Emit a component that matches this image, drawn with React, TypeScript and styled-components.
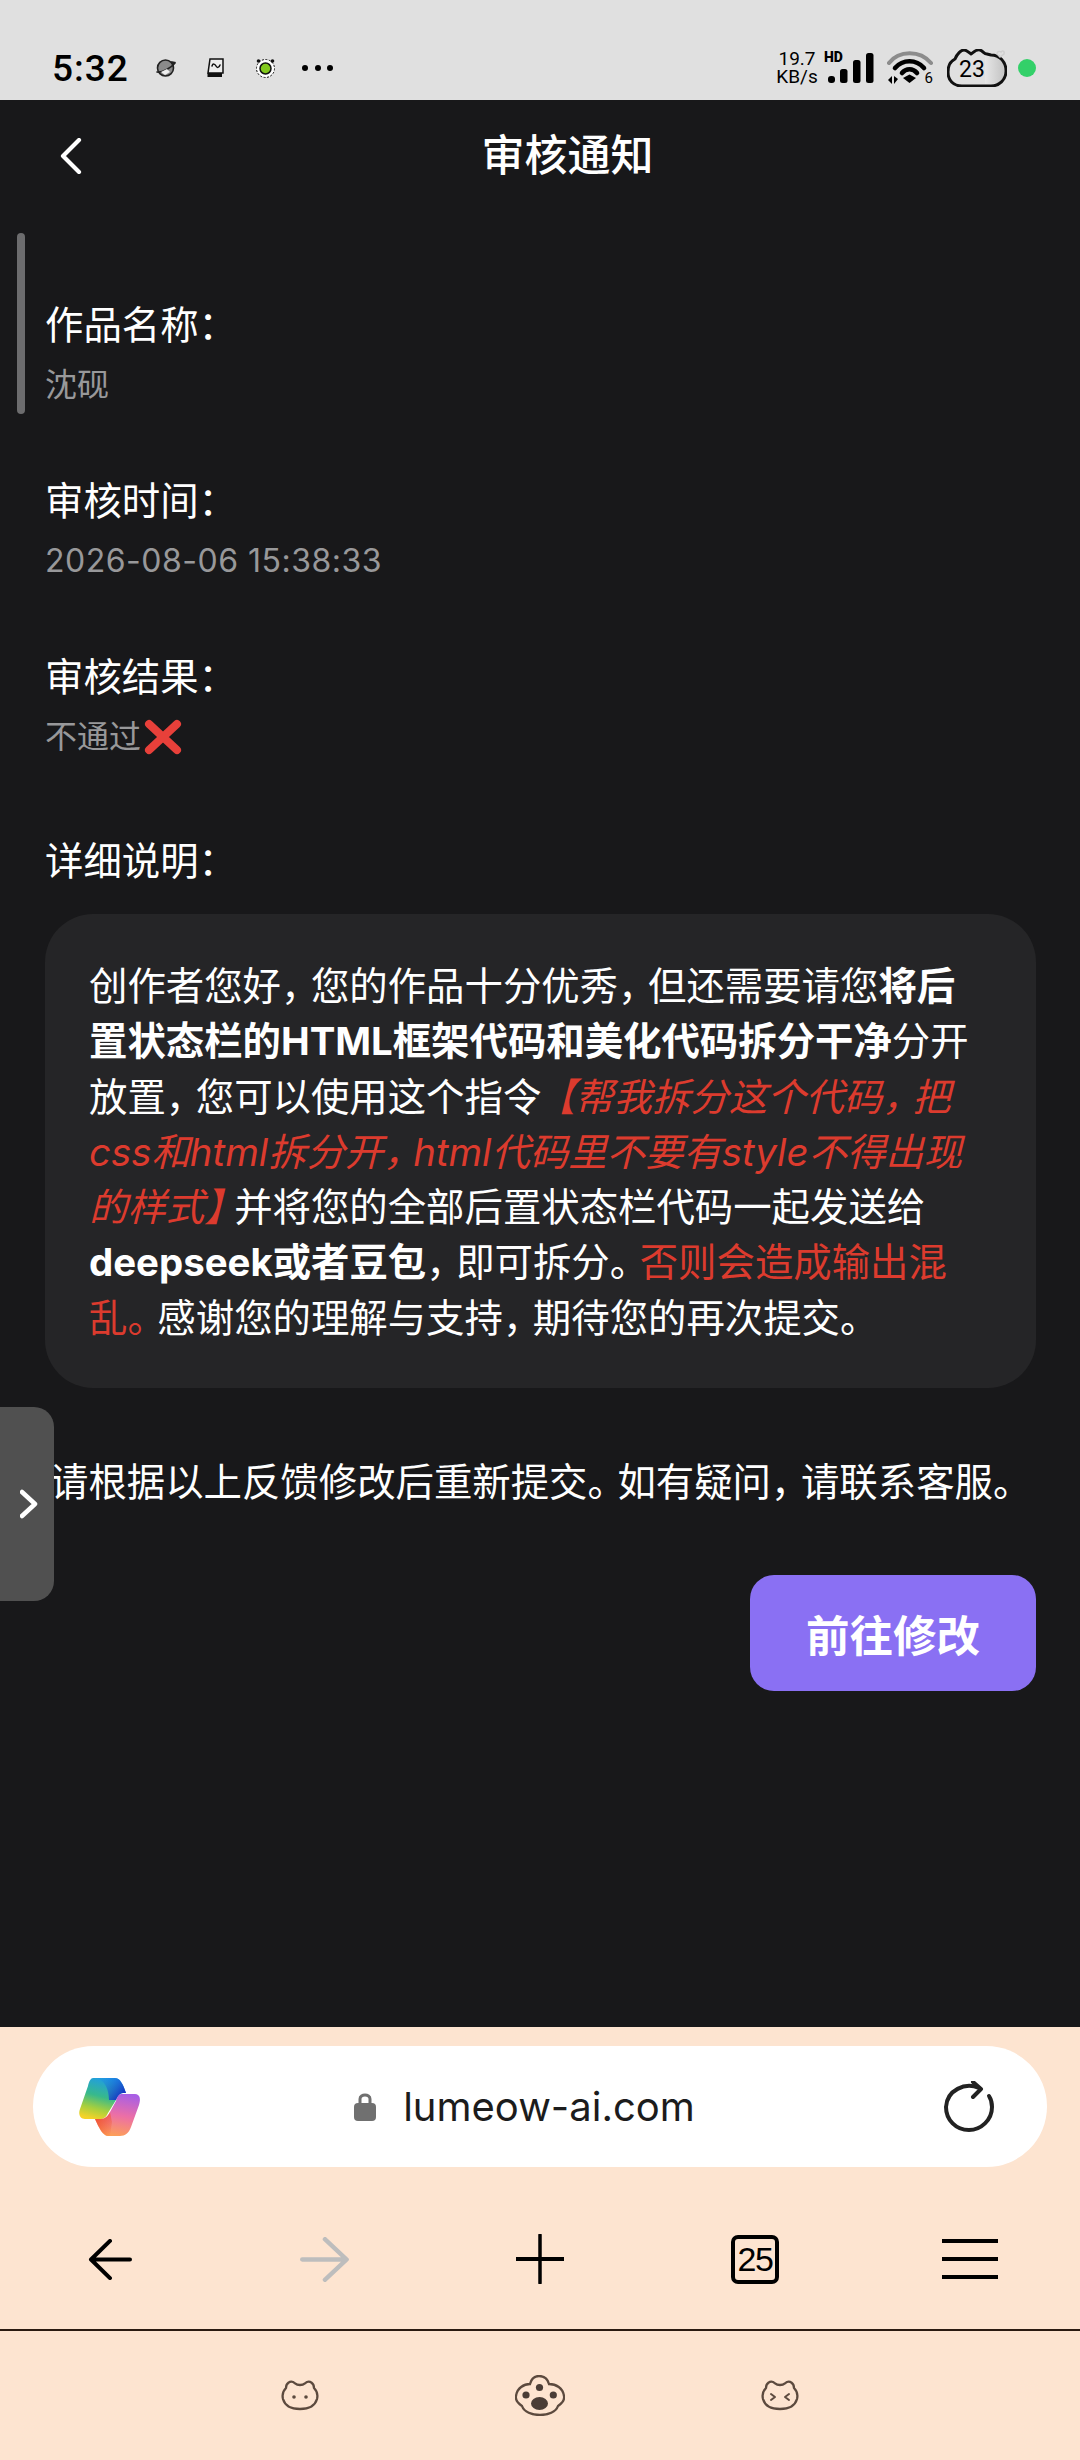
import React from "react"
import styled, { createGlobalStyle } from "styled-components"

const GlobalStyle = createGlobalStyle`
  html, body {
    margin: 0;
    padding: 0;
    background: #18181a;
  }
  * {
    box-sizing: border-box;
  }
`

const fontStack = `Inter, "Noto Sans CJK SC", sans-serif`

// full-width punctuation
const COMMA = "\uFF0C"
const COLON = "\uFF1A"

const Page = styled.div`
  width: 1080px;
  height: 2460px;
  position: relative;
  overflow: hidden;
  display: flex;
  flex-direction: column;
  font-family: ${fontStack};
  color: #fff;
  background: #18181a;
`

const StatusBar = styled.div`
  height: 100px;
  flex: none;
  background: #e0e0e0;
  color: #000;
  display: flex;
  align-items: flex-end;
  justify-content: space-between;
  padding: 0 44px 11px 52px;
`

const StatusLeft = styled.div`
  display: flex;
  align-items: center;
  height: 42px;
`

const Clock = styled.span`
  font-family: Roboto, sans-serif;
  font-size: 37px;
  font-weight: 500;
  letter-spacing: 1px;
  width: 104px;
`

const NotifIcons = styled.div`
  display: flex;
  align-items: center;
  gap: 31px;
`

const Dots = styled.div`
  display: flex;
  gap: 6.5px;
  margin-left: -5px;
`

const Dot = styled.i`
  display: block;
  width: 6px;
  height: 6px;
  border-radius: 50%;
  background: #000;
`

const StatusRight = styled.div`
  display: flex;
  align-items: center;
  height: 42px;
`

const Speed = styled.div`
  font-family: Roboto, sans-serif;
  font-size: 19px;
  line-height: 18px;
  text-align: center;
  width: 42px;
  white-space: nowrap;
  color: #000;
`

const SignalWrap = styled.div`
  position: relative;
  width: 48px;
  height: 34px;
  margin-left: 9px;
`

const HdLabel = styled.span`
  position: absolute;
  left: -3px;
  top: -1px;
  font-family: Roboto, sans-serif;
  font-size: 14px;
  line-height: 14px;
  font-weight: 900;
`

const WifiWrap = styled.div`
  position: relative;
  width: 46px;
  height: 34px;
  margin-left: 12px;
`

const WifiBadge = styled.span`
  position: absolute;
  right: 0;
  bottom: -1px;
  font-family: Roboto, sans-serif;
  font-size: 15px;
  line-height: 15px;
`

const BatteryWrap = styled.div`
  position: relative;
  width: 60px;
  height: 38px;
  margin-left: 14px;
`

const BatteryText = styled.span`
  position: absolute;
  left: 11px;
  top: 9px;
  width: 28px;
  text-align: center;
  font-family: Roboto, sans-serif;
  font-size: 23px;
  line-height: 24px;
`

const LiveDot = styled.i`
  display: block;
  width: 18px;
  height: 18px;
  border-radius: 50%;
  background: #33d069;
  margin-left: 11px;
`

const Header = styled.div`
  height: 104px;
  flex: none;
  position: relative;
  display: flex;
  align-items: center;
  justify-content: center;
`

const BackButton = styled.div`
  position: absolute;
  left: 59px;
  top: 38px;
  display: flex;
`

const Title = styled.h1`
  margin: 0 0 0 55px;
  font-size: 43px;
  font-weight: 500;
`

const Content = styled.div`
  flex: 1;
  position: relative;
  padding: 93px 44px 0 45px;
`

const ScrollThumb = styled.div`
  position: absolute;
  left: 17px;
  top: 29px;
  width: 8px;
  height: 181px;
  border-radius: 4px;
  background: #6c6c6e;
`

const Field = styled.div<{ $gap?: number }>`
  margin-bottom: ${(p) => p.$gap ?? 60}px;
`

const Label = styled.div`
  font-size: 38.4px;
  line-height: 56px;
  height: 56px;
`

const Value = styled.div`
  margin-top: 4px;
  font-size: 32px;
  line-height: 56px;
  height: 56px;
  color: #98989a;
  display: flex;
  align-items: center;
`

const DateValue = styled(Value)`
  letter-spacing: 0.5px;
`

const Card = styled.div`
  margin-top: 25px;
  width: 991px;
  height: 474px;
  border-radius: 48px;
  background: #252527;
  padding: 45px 44px;
  font-size: 38.4px;
  line-height: 55.3px;
  white-space: nowrap;
`

const Strong = styled.b`
  font-weight: 700;
`

const Red = styled.span`
  color: #dc3b2e;
`

const RedItalic = styled.em`
  color: #dc3b2e;
  font-style: italic;
`

// the reference sets CJK punctuation a little narrower than a full em
const Tight = styled.span<{ $em?: number }>`
  letter-spacing: ${(p) => p.$em ?? -0.22}em;
`

const Comma = () => <Tight>{COMMA}</Tight>

const Note = styled.p`
  margin: 66px 0 0 5px;
  font-size: 38.4px;
  line-height: 56px;
  white-space: nowrap;
`

const Actions = styled.div`
  display: flex;
  justify-content: flex-end;
  margin-top: 65px;
`

const EditButton = styled.button`
  width: 286px;
  height: 116px;
  border: none;
  border-radius: 24px;
  background: #8a70f3;
  color: #fff;
  font-family: ${fontStack};
  font-size: 43.5px;
  font-weight: 700;
`

const SideTab = styled.div`
  position: absolute;
  left: 0;
  top: 1407px;
  width: 54px;
  height: 194px;
  border-radius: 0 20px 20px 0;
  background: #505050;
  display: flex;
  align-items: center;
  padding-left: 20px;
`

const BrowserChrome = styled.div`
  height: 433px;
  flex: none;
  background: #fde4d0;
  color: #000;
  display: flex;
  flex-direction: column;
`

const AddressArea = styled.div`
  height: 304px;
  padding-top: 19px;
  border-bottom: 2px solid #2a1a10;
  display: flex;
  flex-direction: column;
`

const AddressBar = styled.div`
  margin: 0 33px;
  height: 121px;
  flex: none;
  border-radius: 61px;
  background: #fff;
  display: flex;
  align-items: center;
  justify-content: space-between;
  padding: 0 52px 0 46px;
`

const Domain = styled.div`
  display: flex;
  align-items: center;
  gap: 27px;
  margin-right: 35px;
  font-size: 40px;
  color: #1c1c1c;
`

const ToolRow = styled.div`
  flex: 1;
  display: grid;
  grid-template-columns: repeat(5, 215px);
  justify-content: center;
  justify-items: center;
  align-items: center;
  padding-top: 22px;
`

const TabCount = styled.div`
  width: 48px;
  height: 49px;
  border: 4px solid #000;
  border-radius: 7px;
  display: flex;
  align-items: center;
  justify-content: center;
  font-family: "Liberation Sans", sans-serif;
  font-size: 34px;
  letter-spacing: -1.5px;
`

const CatRow = styled.div`
  flex: 1;
  display: grid;
  grid-template-columns: repeat(3, 240px);
  justify-content: center;
  justify-items: center;
  align-items: center;
`

const Line = styled.path.attrs({ fill: "none", strokeLinecap: "round", strokeLinejoin: "round" })``

const CrossSvg = styled.svg`
  margin-left: 3px;
`

// small notification glyphs next to the clock
const PlanetIcon = () => (
  <svg width="20" height="20" viewBox="0 0 20 20">
    <circle cx="9.5" cy="10" r="8" fill="#8a8a8a" stroke="#222" strokeWidth="1.6" />
    <Line d="M1 14 C6 15 15 10 19 5" stroke="#222" strokeWidth="1.6" />
    <path d="M5 14 L11 11 L14 14 L9 17 Z" fill="#eee" />
    <path d="M15 3 L20 4 L17 8 Z" fill="#222" />
  </svg>
)

const BookIcon = () => (
  <svg width="17" height="20" viewBox="0 0 17 20">
    <path d="M3 1 H16 V15 H1 Z" fill="#eee" stroke="#111" strokeWidth="1.5" />
    <path d="M0.5 15 H15 V19 H0.5 Z" fill="#111" />
    <Line d="M5 8 C6 5 8 6 9 8 C10 10 12 10 13 7" stroke="#111" strokeWidth="1.5" />
  </svg>
)

const FrogIcon = () => (
  <svg width="21" height="20" viewBox="0 0 21 20">
    <circle cx="10.5" cy="10.5" r="9" fill="#fff" stroke="#111" strokeWidth="1" strokeDasharray="2 1.5" />
    <circle cx="10.5" cy="10.5" r="5.5" fill="#82c91e" stroke="#111" strokeWidth="1.5" />
    <circle cx="3.5" cy="3" r="1.8" fill="#111" />
    <circle cx="17.5" cy="3" r="1.8" fill="#111" />
  </svg>
)

const SignalIcon = () => (
  <svg width="48" height="34" viewBox="0 0 48 34">
    <rect x="1" y="25" width="7" height="7" rx="3" fill="#000" />
    <rect x="13" y="18" width="7.5" height="14" rx="2.5" fill="#000" />
    <rect x="26" y="9" width="7.5" height="23" rx="2.5" fill="#000" />
    <rect x="39" y="2" width="7.5" height="30" rx="2.5" fill="#000" />
  </svg>
)

const WifiIcon = () => (
  <svg width="46" height="34" viewBox="0 0 46 34">
    <Line d="M2 12 C12 -1 33 -1 44 12" stroke="#8c8c8c" strokeWidth="4" />
    <Line d="M8 17 C16 8 29 8 37 17" stroke="#000" strokeWidth="4.6" />
    <Line d="M15 22 C19 17 26 17 30 22" stroke="#000" strokeWidth="4.6" />
    <path d="M16 27 L22.5 23.5 L29 27 L22.5 32 Z" fill="#000" />
    <path d="M1 29 L5 25 L5 33 Z M7 25 L7 33 L11 28 Z" fill="#000" />
  </svg>
)

const BatteryIcon = () => (
  <svg width="60" height="38" viewBox="0 0 60 38" style={{ position: "absolute", left: 0, top: 0 }}>
    <defs>
      <linearGradient id="battFill" x1="0" y1="0" x2="1" y2="0">
        <stop offset="0" stopColor="#e6e6e6" />
        <stop offset="1" stopColor="#c4c4c4" />
      </linearGradient>
    </defs>
    <path d="M38 7 H45 C52 7 57 13 57 22 C57 30 52 35 44 35 H38 Z" fill="url(#battFill)" />
    <path
      d="M8 10 C10 5 14 1 17 1 C20 1 22 4 24 5 C26 4 29 0 33 1 C36 2 37 5 40 5 L44 6 C52 6 59 12 59 22 C59 31 52 37 44 37 L15 37 C6 37 1 31 1 23 C1 17 4 12 8 10 Z"
      fill="none"
      stroke="#111"
      strokeWidth="3"
    />
    <path d="M50 5 C50 2 53 2 54 3 C55 1 58 2 57 5 L53 8 Z" fill="none" stroke="#cfcfcf" strokeWidth="1.4" />
  </svg>
)

const BackIcon = () => (
  <svg width="24" height="36" viewBox="0 0 24 36">
    <Line d="M20 2 L4 18 L20 34" stroke="#fff" strokeWidth="4.2" />
  </svg>
)

const SideChevron = () => (
  <svg width="18" height="30" viewBox="0 0 18 30">
    <Line d="M2 3 L15 15 L2 27" stroke="#fff" strokeWidth="4.5" />
  </svg>
)

const CopilotIcon = () => (
  <svg width="62" height="58" viewBox="0 0 62 58">
    <defs>
      <linearGradient id="cpLeft" x1="0.6" y1="0" x2="0.3" y2="1">
        <stop offset="0" stopColor="#1f9be8" />
        <stop offset="0.45" stopColor="#37b98c" />
        <stop offset="0.75" stopColor="#a6cf3e" />
        <stop offset="1" stopColor="#f5d327" />
      </linearGradient>
      <linearGradient id="cpBlue" x1="0" y1="0" x2="1" y2="0.6">
        <stop offset="0" stopColor="#1f9be8" stopOpacity="0" />
        <stop offset="1" stopColor="#1432c4" />
      </linearGradient>
      <linearGradient id="cpRight" x1="0.6" y1="0" x2="0.4" y2="1">
        <stop offset="0" stopColor="#a95fe4" />
        <stop offset="0.5" stopColor="#ec6fa6" />
        <stop offset="1" stopColor="#fda057" />
      </linearGradient>
      <linearGradient id="cpTail" x1="0" y1="0" x2="1" y2="1">
        <stop offset="0" stopColor="#f04c22" />
        <stop offset="1" stopColor="#f04c22" stopOpacity="0" />
      </linearGradient>
    </defs>
    <path
      d="M14 0 H36 C41 0 44 6 47 15 H44 C41 15 39 18 37 22 L29 35 C27 39 25 41 21 41 H6 C1 41 -1 36 1 31 L9 8 C10 3 12 0 14 0 Z"
      fill="url(#cpLeft)"
    />
    <path
      d="M14 0 H36 C41 0 44 6 47 15 H44 C41 15 39 18 37 22 L30 22 C30 12 26 0 14 0 Z"
      fill="url(#cpBlue)"
    />
    <path
      d="M42 16 H56 C61 16 62 21 60 27 L52 49 C50 55 46 58 41 58 H29 C24 58 20 50 16 41 H22 C26 41 29 38 31 34 L37 23 C38 19 40 16 42 16 Z"
      fill="url(#cpRight)"
    />
    <path
      d="M16 41 H22 C26 41 29 38 31 34 L33 44 L31 58 H29 C24 58 20 50 16 41 Z"
      fill="url(#cpTail)"
    />
  </svg>
)

const LockIcon = () => (
  <svg width="22" height="29" viewBox="0 0 22 29">
    <path d="M6 13 V7 C6 1.5 16 1.5 16 7 V13" fill="none" stroke="#707070" strokeWidth="3" />
    <rect x="0" y="11" width="22" height="18" rx="4" fill="#707070" />
  </svg>
)

const ReloadIcon = () => (
  <svg width="52" height="52" viewBox="0 0 52 52">
    <Line d="M36 7 C22 1 4 9 3 26 C3 39 13 49 26 49 C38 49 49 39 49 26 C49 22 48 18 46 15" stroke="#222" strokeWidth="4" />
    <Line d="M30 1 L38 8 L30 16" stroke="#222" strokeWidth="4" />
  </svg>
)

const ArrowIcon = ({ flip, color, width, height }: { flip?: boolean; color: string; width: number; height: number }) => (
  <svg
    width={width}
    height={height}
    viewBox="0 0 44 42"
    preserveAspectRatio="none"
    style={flip ? { transform: "scaleX(-1)" } : undefined}
  >
    <Line d="M42 21 H4 M22 2 L3 21 L22 40" stroke={color} strokeWidth="4" />
  </svg>
)

const PlusIcon = () => (
  <svg width="50" height="50" viewBox="0 0 50 50">
    <Line d="M25 1 V49" stroke="#000" strokeWidth="3.5" />
    <path d="M1 23 H49 V27 H1 Z" fill="#000" />
  </svg>
)

const MenuIcon = () => (
  <svg width="56" height="42" viewBox="0 0 56 42">
    <path d="M0 1 H56 V5 H0 Z M0 19 H56 V23 H0 Z M0 37 H56 V41 H0 Z" fill="#000" />
  </svg>
)

const CatFace = ({ face }: { face: "dots" | "squint" }) => (
  <svg width="38" height="31" viewBox="0 0 38 31">
    <path
      d="M5 8 C5 3 9 1 12 2 C14 3 15 5 19 5 C23 5 24 3 26 2 C29 1 33 3 33 8 C36 11 37 15 36 19 C34 26 27 29 19 29 C11 29 4 26 2 19 C1 15 2 11 5 8 Z"
      fill="none"
      stroke="#5c4a3e"
      strokeWidth="2.3"
      strokeLinejoin="round"
    />
    {face === "dots" ? (
      <>
        <circle cx="13" cy="17" r="1.8" fill="#5c4a3e" />
        <circle cx="25" cy="17" r="1.8" fill="#5c4a3e" />
      </>
    ) : (
      <>
        <Line d="M10 14 L14 17 L10 20" stroke="#5c4a3e" strokeWidth="2" />
        <Line d="M28 14 L24 17 L28 20" stroke="#5c4a3e" strokeWidth="2" />
      </>
    )}
  </svg>
)

const PawIcon = () => (
  <svg width="50" height="41" viewBox="0 0 50 41">
    <path
      d="M24 1 C30 1 33 5 34 9 C41 9 48 13 49 21 C50 26 46 29 43 31 C41 37 33 40 25 40 C17 40 9 37 7 31 C4 29 0 26 1 21 C2 13 9 9 15 9 C16 5 19 1 24 1 Z"
      fill="#fde4d0"
      stroke="#5c4a3e"
      strokeWidth="2.3"
    />
    <ellipse cx="24.5" cy="28.5" rx="8.5" ry="6.5" fill="#4a3d36" />
    <circle cx="24.5" cy="12.5" r="3.6" fill="#4a3d36" />
    <circle cx="11" cy="20" r="3.6" fill="#4a3d36" />
    <circle cx="38.3" cy="20" r="3.6" fill="#4a3d36" />
  </svg>
)

const CrossMark = () => (
  <CrossSvg width="38" height="36" viewBox="0 0 38 36">
    <Line d="M5 5 L33 31 M33 5 L5 31" stroke="#e8403a" strokeWidth="8" />
  </CrossSvg>
)

export default function App() {
  return (
    <Page>
      <GlobalStyle />
      <StatusBar>
        <StatusLeft>
          <Clock>5:32</Clock>
          <NotifIcons>
            <PlanetIcon />
            <BookIcon />
            <FrogIcon />
            <Dots>
              <Dot />
              <Dot />
              <Dot />
            </Dots>
          </NotifIcons>
        </StatusLeft>
        <StatusRight>
          <Speed>
            19.7
            <br />
            KB/s
          </Speed>
          <SignalWrap>
            <SignalIcon />
            <HdLabel>HD</HdLabel>
          </SignalWrap>
          <WifiWrap>
            <WifiIcon />
            <WifiBadge>6</WifiBadge>
          </WifiWrap>
          <BatteryWrap>
            <BatteryIcon />
            <BatteryText>23</BatteryText>
          </BatteryWrap>
          <LiveDot />
        </StatusRight>
      </StatusBar>

      <Header>
        <BackButton>
          <BackIcon />
        </BackButton>
        <Title>审核通知</Title>
      </Header>

      <Content>
        <ScrollThumb />
        <Field>
          <Label>作品名称{COLON}</Label>
          <Value>沈砚</Value>
        </Field>
        <Field>
          <Label>审核时间{COLON}</Label>
          <DateValue>2026-08-06 15:38:33</DateValue>
        </Field>
        <Field $gap={68}>
          <Label>审核结果{COLON}</Label>
          <Value>
            不通过
            <CrossMark />
          </Value>
        </Field>
        <Label>详细说明{COLON}</Label>
        <Card>
          创作者您好<Comma />您的作品十分优秀<Comma />但还需要请您<Strong>将后</Strong>
          <br />
          <Strong>置状态栏的HTML框架代码和美化代码拆分干净</Strong>分开
          <br />
          放置<Comma />您可以使用这个指<Tight $em={-0.12}>令</Tight>
          <RedItalic>
            【帮我拆分这个代码<Comma />把
            <br />
            css和html拆分开<Comma />html代码里不要有style不得出现
            <br />
            的样式<Tight>】</Tight>
          </RedItalic>
          并将您的全部后置状态栏代码一起发送给
          <br />
          <Strong>deepseek或者豆包</Strong>
          <Comma />即可拆分<Tight>。</Tight>
          <Red>否则会造成输出混</Red>
          <br />
          <Red>
            乱<Tight>。</Tight>
          </Red>
          感谢您的理解与支持<Comma />期待您的再次提交。
        </Card>
        <Note>
          请根据以上反馈修改后重新提交<Tight>。</Tight>如有疑问<Comma />请联系客服。
        </Note>
        <Actions>
          <EditButton>前往修改</EditButton>
        </Actions>
      </Content>

      <SideTab>
        <SideChevron />
      </SideTab>

      <BrowserChrome>
        <AddressArea>
          <AddressBar>
            <CopilotIcon />
            <Domain>
              <LockIcon />
              lumeow-ai.com
            </Domain>
            <ReloadIcon />
          </AddressBar>
          <ToolRow>
            <ArrowIcon color="#000" width={44} height={41} />
            <ArrowIcon flip color="#bdbdbd" width={50} height={45} />
            <PlusIcon />
            <TabCount>25</TabCount>
            <MenuIcon />
          </ToolRow>
        </AddressArea>
        <CatRow>
          <CatFace face="dots" />
          <PawIcon />
          <CatFace face="squint" />
        </CatRow>
      </BrowserChrome>
    </Page>
  )
}
